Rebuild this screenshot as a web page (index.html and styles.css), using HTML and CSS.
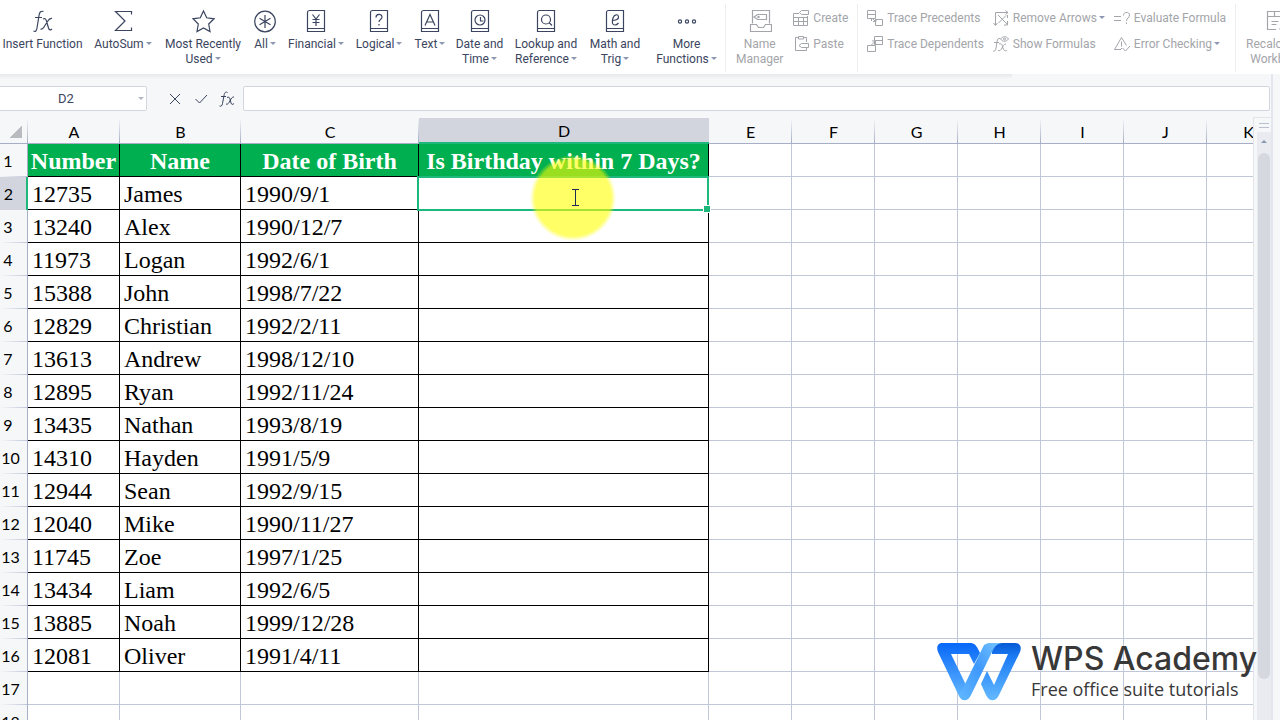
FILE: index.html
```html
<!DOCTYPE html>
<html lang="en">
  <head>
    <meta charset="UTF-8" />
    <meta name="viewport" content="width=device-width, initial-scale=1.0" />
    <title>WPS Spreadsheet</title>
    <link rel="stylesheet" href="styles.css">
  </head>
  <body>
    <header class="ribbon">
      <div class="functions">
        <button class="tool">
          <svg class="icon" viewBox="0 0 24 24"><path d="M12.500 2.500c-3-1-4 1-4.500 4L6 19c-.5 3-1.500 4-3.500 3M4 8.500h7M12 10c2-1 3 0 3.500 2l2 7c.5 2 2 2.500 3.500 1M21 9.500c-2-.5-3 .5-4.500 3L13 18c-1 2-2 2.500-3.500 2" /></svg>
          <span>Insert Function</span>
        </button>
        <button class="tool">
          <svg class="icon" viewBox="0 0 24 24"><path d="M20.500 5.500v-3h-16L14 12 4.500 21.500h16v-3" /></svg>
          <span class="drop">AutoSum</span>
        </button>
        <button class="tool">
          <svg class="icon" viewBox="0 0 24 24"><path d="M12.500 2l3.200 6.800 7.300 1-5.300 5.200 1.300 7.500-6.500-3.600L6 22.500 7.300 15 2 9.800l7.300-1z" /></svg>
          <span class="drop">Most Recently<br />Used</span>
        </button>
        <button class="tool">
          <svg class="icon" viewBox="0 0 24 24"><circle cx="12" cy="12.500" r="10.300" /><path d="M12 6v13M6.500 9.200l11 6.600M17.500 9.200l-11 6.600" /></svg>
          <span class="drop">All</span>
        </button>
        <button class="tool">
          <svg class="icon" viewBox="0 0 24 24"><path d="M5.500 1.500h15v21h-17v-19a2 2 0 0 1 2-2zM3.500 19.500h17M8.500 5.500L12 10l3.500-4.500M12 10v7M8.500 10.500h7M8.500 13.500h7" /></svg>
          <span class="drop">Financial</span>
        </button>
        <button class="tool">
          <svg class="icon" viewBox="0 0 24 24"><path d="M5.500 1.500h15v21h-17v-19a2 2 0 0 1 2-2zM3.500 19.500h17M9 8.500c0-4 6-4 6-.5 0 2.500-3 2.500-3 5M12 15v1.500" /></svg>
          <span class="drop">Logical</span>
        </button>
        <button class="tool">
          <svg class="icon" viewBox="0 0 24 24"><path d="M5.500 1.500h15v21h-17v-19a2 2 0 0 1 2-2zM3.500 19.500h17M7 16.500l5-11 5 11M8.500 13h7" /></svg>
          <span class="drop">Text</span>
        </button>
        <button class="tool">
          <svg class="icon" viewBox="0 0 24 24"><path d="M5.500 1.500h15v21h-17v-19a2 2 0 0 1 2-2zM3.500 19.500h17M12.500 8v4h3" /><circle cx="12" cy="11" r="5" /></svg>
          <span class="drop">Date and<br />Time</span>
        </button>
        <button class="tool">
          <svg class="icon" viewBox="0 0 24 24"><path d="M5.500 1.500h15v21h-17v-19a2 2 0 0 1 2-2zM3.500 19.500h17M15 13.500l3 3" /><circle cx="12" cy="10.500" r="4.500" /></svg>
          <span class="drop">Lookup and<br />Reference</span>
        </button>
        <button class="tool">
          <svg class="icon" viewBox="0 0 24 24"><path d="M5.500 1.500h15v21h-17v-19a2 2 0 0 1 2-2zM3.500 19.500h17M9 11.500c4 0 7-1.500 6.500-4-.5-2.500-4-2.500-5.500 1.500-1.500 5-.5 7 2 7 1.500 0 2.500-.8 3.500-2" /></svg>
          <span class="drop">Math and<br />Trig</span>
        </button>
        <button class="tool">
          <svg class="icon" viewBox="0 0 24 24"><circle cx="5" cy="12.500" r="1.600" /><circle cx="12" cy="12.500" r="1.600" /><circle cx="19" cy="12.500" r="1.600" /></svg>
          <span class="drop">More<br />Functions</span>
        </button>
      </div>

      <div class="group names">
        <button class="tool" disabled>
          <svg class="icon" viewBox="0 0 24 24"><path d="M4.500 14.500v-13h17v13M2.500 15.500h6l2 3h5l2-3h6v7h-21zM9.500 5.500h9v5h-9L6 8z" /><circle cx="10.500" cy="8" r=".6" /></svg>
          <span>Name<br />Manager</span>
        </button>
        <div class="stack">
          <button class="small" disabled>
            <svg class="mini" viewBox="0 0 16 16"><path d="M6 3.500H.5v12h14V6M.5 7.500h14M.5 11.500h14M5.500 7.500v8M10.500 7.500v8M8.500.5h7v4h-7L6.500 2.500z" /></svg>
            Create
          </button>
          <button class="small" disabled>
            <svg class="mini" viewBox="0 0 16 16"><path d="M5 1.500H2.500v13h11v-3M11 1.500h2.500V6M5.500.5h5v2.500h-5zM8.500 7.500h7v4h-7L6 9.500z" /></svg>
            Paste
          </button>
        </div>
      </div>

      <div class="group auditing">
        <div class="stack">
          <button class="small" disabled>
            <svg class="mini" viewBox="0 0 16 16"><path d="M.5.500h8v8h-8zM.5 4.500h8M8.500 9.500h7v6h-7zM4.500 8v3M5 8l4 4M6 11.500h3V9" /></svg>
            Trace Precedents
          </button>
          <button class="small" disabled>
            <svg class="mini" viewBox="0 0 16 16"><path d="M7.500.500h8v8h-8zM7.500 4.500h8M.5 9.500h8v6h-8zM4.500 9l4-4M5 5h3.500v3" /></svg>
            Trace Dependents
          </button>
        </div>
        <div class="stack">
          <button class="small" disabled>
            <svg class="mini" viewBox="0 0 16 16"><path d="M2.500 15V2.500H15M12.500.5l2.500 2-2.500 2M.5 13l2 2.500 2-2.500M5 5l9.500 9.500M13 5.500L5.500 13M14.500 11v4H11M14.500 5v3" /></svg>
            <span class="drop">Remove Arrows</span>
          </button>
          <button class="small" disabled>
            <svg class="mini" viewBox="0 0 16 16"><path d="M7 2.500C5 2 4.500 3 4 6l-1 6c-.5 3-1.500 3.500-3 3M1 6.500h5M6 8c3-1 3 1 4 4s2 3.500 4 2M13 8c-2 0-3 2-4 4s-2 3-4 2.500M7.500 3c2-3 6-3 8 0-2 3-6 3-8 0z" /><circle cx="11.500" cy="3" r="1" /></svg>
            Show Formulas
          </button>
        </div>
        <div class="stack">
          <button class="small" disabled>
            <svg class="mini" viewBox="0 0 16 16"><path d="M0 6.500h7M0 10.500h7M9.500 5.500c0-4 6-4 6-.5 0 3-3 3-3 6M12.500 12.500V14" /></svg>
            Evaluate Formula
          </button>
          <button class="small" disabled>
            <svg class="mini" viewBox="0 0 16 16"><path d="M7 13.500H.500L7.500 1.500l5 8M7.500 5.500v5M7.500 12v1M8.500 12l3 3 4.500-5" /></svg>
            <span class="drop">Error Checking</span>
          </button>
        </div>
      </div>

      <div class="group calculation">
        <button class="tool" disabled>
          <svg class="icon" viewBox="0 0 24 24"><path d="M11 20.500H2.500v-18h21v11M2.500 7.500h21M9.500 2.500v5M16.500 2.500v5M6.500 12.500h7M6.500 15.500h5M17 22v-4c0-2 1.500-3.500 4-3.500M14.500 19.500l2.500 2.500 2.500-2.500" /></svg>
          <span>Recalculate<br />Workbook</span>
        </button>
      </div>
    </header>

    <main class="workspace">
      <div class="document">
        <div class="formula-bar">
          <div class="name-box">
            <input type="text" value="D2" aria-label="Name box" />
          </div>
          <div class="formula-actions">
            <button aria-label="Cancel">
              <svg class="mini" viewBox="0 0 16 16"><path d="M3 3l10 10M13 3L3 13" /></svg>
            </button>
            <button aria-label="Enter">
              <svg class="mini" viewBox="0 0 16 16"><path d="M2.500 8l4 4L14 4" /></svg>
            </button>
            <button aria-label="Insert function">
              <svg class="mini" viewBox="0 0 16 16"><path d="M8.500 1.500c-2-1-3 0-3.500 3l-1.500 8c-.5 2.500-1.300 3-3 2.500M2 5.500h5M8 6.500c1.500-1 2.500 0 3 1.500l1 4c.5 1.500 1.500 2 3 .5M15 6c-1.500 0-2 .5-3 2l-2 3.500c-1 1.500-1.500 2-3 1.500" /></svg>
            </button>
          </div>
          <input class="formula" type="text" aria-label="Formula" />
        </div>

        <div class="sheet-area">
          <div class="sheet">
            <table class="grid">
              <colgroup>
                <col class="col-head" /><col class="col-a" /><col class="col-b" /><col class="col-c" /><col class="col-d" />
                <col /><col /><col /><col /><col /><col /><col />
              </colgroup>
              <thead>
                <tr>
                  <th class="corner"></th>
                  <th>A</th><th>B</th><th>C</th><th class="active">D</th><th>E</th><th>F</th>
                  <th>G</th><th>H</th><th>I</th><th>J</th><th>K</th>
                </tr>
              </thead>
              <tbody id="rows"></tbody>
            </table>
          </div>
          <div class="scrollbar">
            <div class="splitter"></div>
            <div class="arrow-up"></div>
            <div class="thumb"></div>
          </div>
        </div>
      </div>
      <div class="side-edge"></div>
    </main>

    <div class="brand">
      <svg class="brand-mark" viewBox="0 0 84 58">
        <defs>
          <linearGradient id="blue" x1="0" y1="0" x2="0" y2="1">
            <stop offset="0" stop-color="#0868f8" />
            <stop offset="1" stop-color="#65baff" />
          </linearGradient>
          <linearGradient id="right" x1="0" y1="0" x2="0" y2="1">
            <stop offset="0" stop-color="#0759d5" />
            <stop offset=".25" stop-color="#1c7cf5" />
            <stop offset="1" stop-color="#65baff" />
          </linearGradient>
          <linearGradient id="stroke" x1="1" y1="0" x2="0" y2="1">
            <stop offset="0" stop-color="#78c6ff" />
            <stop offset=".5" stop-color="#3f98fc" />
            <stop offset="1" stop-color="#62b8ff" />
          </linearGradient>
        </defs>
        <path fill="url(#blue)" d="M5 0h28c4 0 6 2 8 6l2 4-6 11-5-10H14l15 31-2 15c-2 0-4-2-5-4L1 9C-1 4 1 0 5 0z" />
        <path fill="url(#right)" d="M55 0h23c5 0 7 4 5 9L62 52c-3 7-10 7-13 0l-5-11 6-13 7 14 14-31H55z" />
        <path fill="url(#stroke)" d="M46 4c1-3 4-4 7-4h13c-5 0-8 3-10 7L34 52c-3 7-10 7-12 0l6-11z" />
      </svg>
      <div class="brand-text">
        <div class="brand-name">WPS Academy</div>
        <div class="brand-tagline">Free office suite tutorials</div>
      </div>
    </div>

    <script src="sheet.js"></script>
  </body>
</html>
```
FILE: styles.css
```css
* {
  box-sizing: border-box;
}

body {
  background: #f5f7f9;
  color: #3b4560;
  display: flex;
  flex-direction: column;
  font-family: Roboto, "Noto Sans", sans-serif;
  font-size: 12px;
  height: 100vh;
  line-height: 15px;
  margin: 0;
  overflow: hidden;
}

button,
input {
  background: none;
  border: 0;
  color: inherit;
  font: inherit;
  margin: 0;
  padding: 0;
}

svg {
  fill: none;
  stroke: currentColor;
}

/* Ribbon */

.ribbon {
  background: #fff;
  display: flex;
  flex: none;
  height: 74px;
  overflow: hidden;
  padding: 4px 0 2px;
}

.functions {
  display: grid;
  flex: none;
  grid-template-columns: 85px 76px 84px 40px 62px 64px 38px 61px 72px 66px 77px;
}

.tool {
  align-items: center;
  display: flex;
  flex-direction: column;
  gap: 4px;
  padding-top: 5px;
  white-space: nowrap;
}

.icon {
  flex: none;
  height: 24px;
  stroke-width: 1.2;
  width: 24px;
}

.drop::after {
  border: 3px solid transparent;
  border-bottom: 0;
  border-top-color: #8c97b2;
  content: "";
  display: inline-block;
  margin-left: 2px;
  vertical-align: 3px;
}

.ribbon button:disabled {
  color: #a3a5aa;
}

.group {
  border-left: 1px solid #eceef1;
  display: flex;
  flex: none;
}

.names {
  gap: 10px;
  padding: 0 9px 0 10px;
}

.auditing {
  gap: 9px;
  padding: 0 9px;
}

.calculation {
  padding-left: 10px;
}

.stack {
  display: flex;
  flex-direction: column;
  gap: 10px;
  padding-top: 6px;
}

.small {
  align-items: center;
  display: flex;
  gap: 4px;
  height: 16px;
  white-space: nowrap;
}

.mini {
  flex: none;
  height: 16px;
  width: 16px;
}

/* Formula bar */

.workspace {
  display: flex;
  flex: 1;
  min-height: 0;
}

.document {
  display: flex;
  flex: 1;
  flex-direction: column;
  min-width: 0;
}

.side-edge {
  border-left: 2px solid #e4e6ee;
  flex: none;
  width: 9px;
}

.formula-bar {
  background: linear-gradient(#e6e8ea, #f5f7f9) no-repeat 0 0 / 1012px 5px;
  display: flex;
  flex: none;
  height: 44px;
  padding: 12px 1px 7px 0;
}

.name-box {
  background: #fff;
  border: 1px solid #d3d6de;
  border-left: 0;
  border-radius: 0 2px 2px 0;
  position: relative;
  width: 147px;
}

.name-box::after {
  border: 3px solid transparent;
  border-bottom: 0;
  border-top-color: #b3b8c5;
  content: "";
  position: absolute;
  right: 2px;
  top: 10px;
}

.name-box input {
  font-size: 13px;
  height: 100%;
  padding-right: 14px;
  text-align: center;
  width: 100%;
}

.formula-actions {
  align-items: center;
  display: flex;
  gap: 10px;
  padding: 0 8px 0 20px;
}

.formula-actions button {
  display: flex;
}

.formula {
  background: #fff;
  border: 1px solid #d3d6de;
  border-radius: 2px;
  flex: 1;
  padding: 0 6px;
}

/* Sheet */

.sheet-area {
  display: flex;
  flex: 1;
  min-height: 0;
}

.sheet {
  flex: 1;
  overflow: hidden;
}

.grid {
  background: #fff;
  border-collapse: separate;
  border-spacing: 0;
  color: #000;
  font-size: 16px;
  table-layout: fixed;
  width: 1290px;
}

.col-head {
  width: 28px;
}

.col-a {
  width: 92px;
}

.col-b {
  width: 121px;
}

.col-c {
  width: 178px;
}

.col-d {
  width: 290px;
}

.grid th,
.grid td {
  height: 33px;
  padding: 0;
  white-space: nowrap;
}

.grid th {
  font-family: Lato, sans-serif;
  font-weight: normal;
  line-height: 20px;
}

.grid thead th {
  background: linear-gradient(#f5f7f9, #a6afc6) no-repeat right / 1px 100% #f5f7f9;
  border-bottom: 1px solid #a6afc6;
  height: 26px;
  padding-top: 2px;
}

.grid thead .active {
  background: #d2d5dd;
  border-bottom: 2px solid #1fb87c;
}

.grid thead .corner {
  background:
    linear-gradient(135deg, transparent 50%, #b9bbc0 50%) no-repeat 9px 7px / 13px 13px,
    linear-gradient(#f5f7f9, #a6afc6) no-repeat right / 1px 100% #f5f7f9;
}

.grid tbody th {
  background: linear-gradient(90deg, #f5f7f9, #c0c7d9) no-repeat bottom / 100% 1px #f5f7f9;
  border-right: 1px solid #a6afc6;
  direction: rtl;
  padding-right: 8px;
}

.grid tbody .active {
  background: #d2d5dd;
  border-right: 2px solid #1fb87c;
  padding-right: 13px;
}

.grid tbody .single {
  padding-right: 13px;
}

.grid td {
  border-bottom: 1px solid #c0c7d9;
  border-right: 1px solid #c0c7d9;
}

.grid .filled {
  border-color: #000;
  font-family: "Liberation Serif", serif;
  font-size: 24px;
  line-height: 28px;
  padding: 2px 0 0 4px;
}

.grid .title {
  background: #00b050;
  color: #fff;
  font-weight: bold;
  padding-left: 0;
  text-align: center;
}

.grid .selected {
  position: relative;
}

.selection {
  border: 2px solid #1fb87c;
  inset: -1px -1px -2px -2px;
  position: absolute;
}

.selection::after {
  background: #1fb87c;
  border: 1px solid #fff;
  bottom: -4px;
  content: "";
  height: 6px;
  position: absolute;
  right: -4px;
  width: 6px;
}

.pointer {
  background: radial-gradient(circle closest-side, rgba(255, 255, 0, 0.6) 88%, transparent);
  height: 86px;
  left: 111px;
  position: absolute;
  top: -22px;
  width: 86px;
  z-index: 1;
}

.pointer svg {
  height: 17px;
  left: 41px;
  position: absolute;
  stroke: #1e2b55;
  top: 34px;
  width: 9px;
}

/* Scrollbar */

.scrollbar {
  background: #e9ebf0;
  border-left: 3px solid #f5f7f9;
  display: flex;
  flex: none;
  flex-direction: column;
  outline: 1px solid #e1e4ea;
  width: 17px;
}

.splitter {
  background: #f5f7f9;
  flex: none;
  height: 14px;
  padding: 5px 2px;
}

.splitter::before {
  border: 1px solid #b9c1ce;
  border-width: 1px 0;
  content: "";
  display: block;
  height: 3px;
}

.arrow-up {
  align-self: center;
  border: 3px solid transparent;
  border-bottom-color: #8c97b2;
  border-top: 0;
  margin: 8px 0 10px;
}

.thumb {
  background: #d5d8df;
  border-radius: 6px;
  flex: 1;
  margin: 0 1px 41px;
}

/* Watermark over the sheet */

.brand {
  align-items: center;
  bottom: 18px;
  color: #383838;
  display: flex;
  gap: 10px;
  position: absolute;
  right: 28px;
}

.brand-mark {
  height: 58px;
  stroke: none;
  width: 84px;
}

.brand-text {
  width: 221px;
}

.brand-name {
  font-family: Inter, sans-serif;
  font-size: 32px;
  font-weight: 500;
  line-height: 34px;
  white-space: nowrap;
}

.brand-tagline {
  font-family: "Open Sans", sans-serif;
  font-size: 18px;
  line-height: 26px;
  white-space: nowrap;
}
```
FILE: sheet.js
```js
const COLUMNS = 11;
const ROWS = 18;

const titles = ["Number", "Name", "Date of Birth", "Is Birthday within 7 Days?"];

const people = [
  ["12735", "James", "1990/9/1"],
  ["13240", "Alex", "1990/12/7"],
  ["11973", "Logan", "1992/6/1"],
  ["15388", "John", "1998/7/22"],
  ["12829", "Christian", "1992/2/11"],
  ["13613", "Andrew", "1998/12/10"],
  ["12895", "Ryan", "1992/11/24"],
  ["13435", "Nathan", "1993/8/19"],
  ["14310", "Hayden", "1991/5/9"],
  ["12944", "Sean", "1992/9/15"],
  ["12040", "Mike", "1990/11/27"],
  ["11745", "Zoe", "1997/1/25"],
  ["13434", "Liam", "1992/6/5"],
  ["13885", "Noah", "1999/12/28"],
  ["12081", "Oliver", "1991/4/11"],
];

const data = [titles, ...people];
const body = document.getElementById("rows");

for (let r = 0; r < ROWS; r++) {
  const row = body.insertRow();
  const head = document.createElement("th");
  head.textContent = r + 1;
  if (r < 9) head.classList.add("single");
  if (r === 1) head.classList.add("active");
  row.append(head);

  for (let c = 0; c < COLUMNS; c++) {
    const cell = row.insertCell();
    if (r < data.length && c < titles.length) {
      cell.classList.add("filled");
      cell.textContent = data[r][c] || "";
    }
    if (r === 0 && c < titles.length) cell.classList.add("title");
    if (r === 1 && c === 3) {
      cell.classList.add("selected");
      cell.innerHTML =
        '<div class="selection"></div>' +
        '<div class="pointer"><svg viewBox="0 0 9 17"><path d="M1 .5h7M4.500 .5v16M1 16.500h7" /></svg></div>';
    }
  }
}
```
